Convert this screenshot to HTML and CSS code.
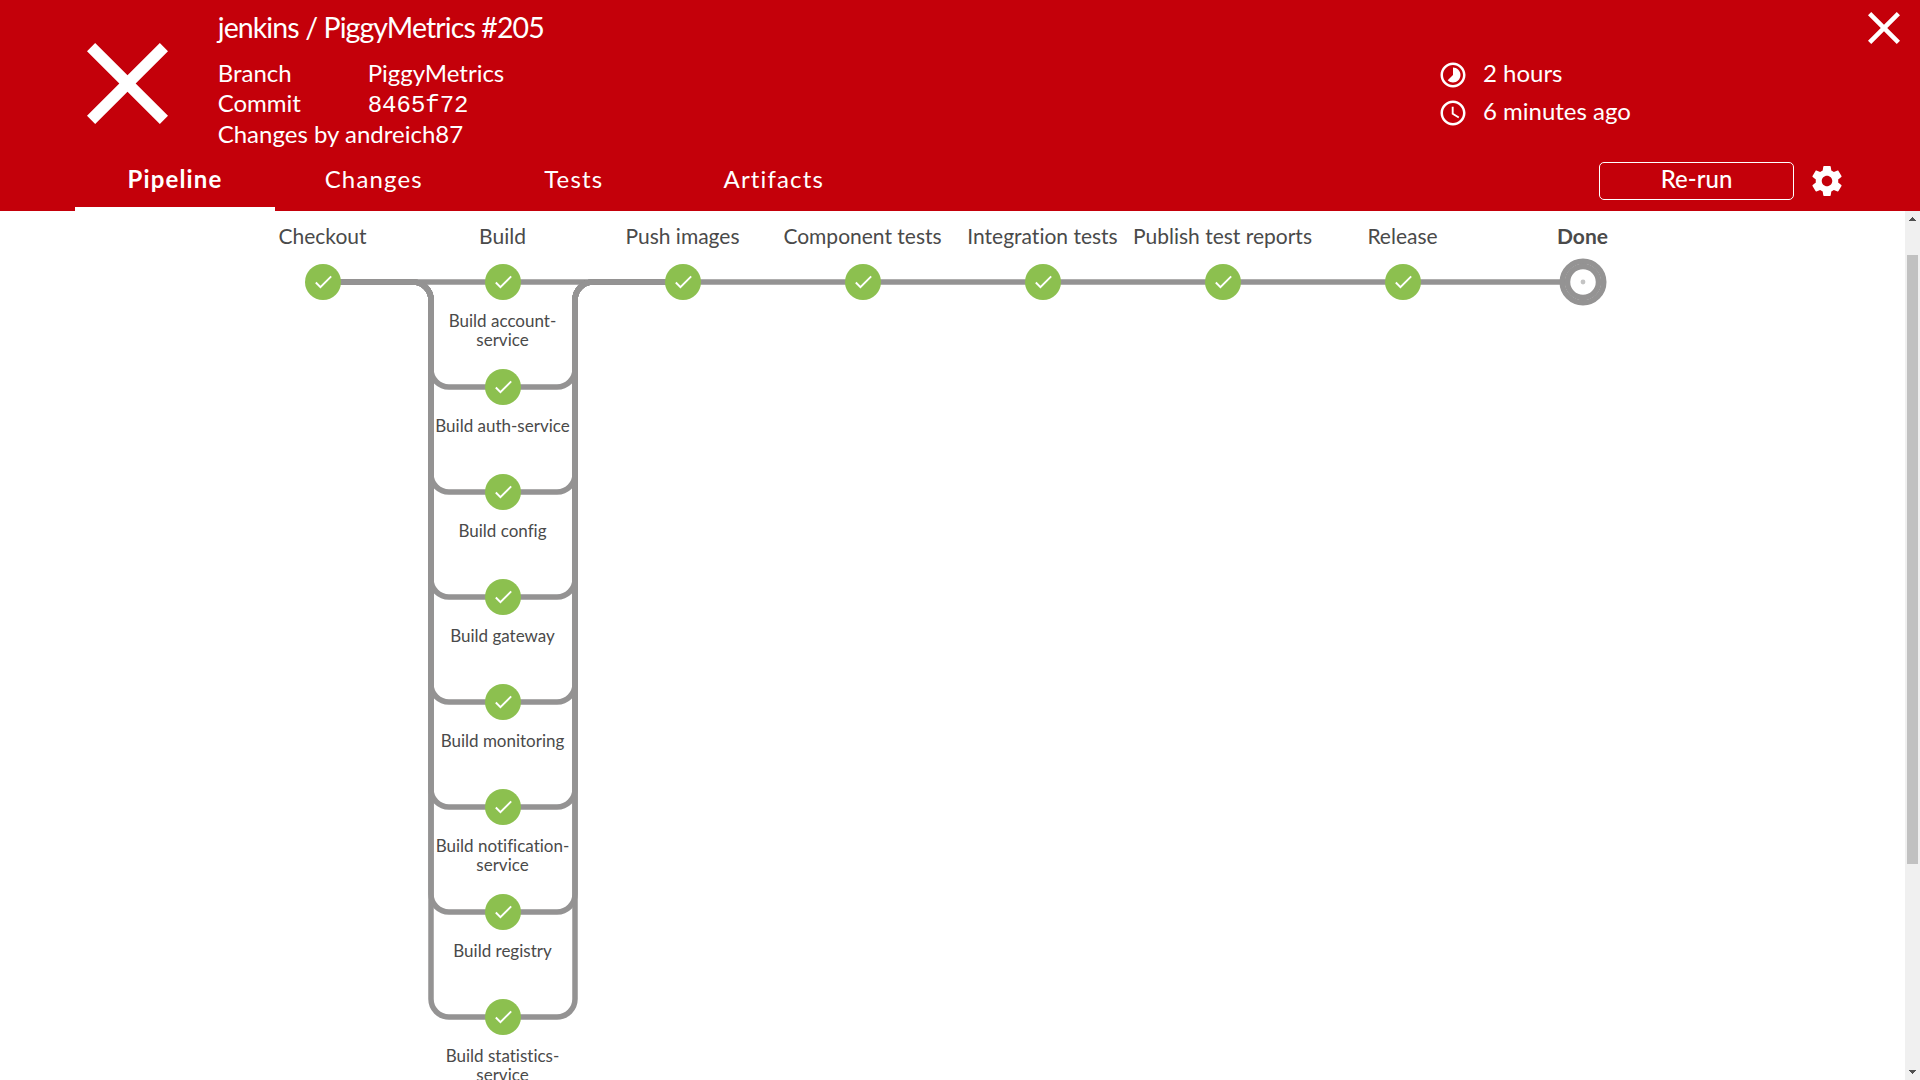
FILE: index.html
```
<!DOCTYPE html>
<html lang="en">
<head>
<meta charset="utf-8">
<title>jenkins / PiggyMetrics #205</title>
<link rel="stylesheet" href="styles.css">
</head>
<body>
<header class="header">
  <div class="top">
    <svg class="status" viewBox="5 5 14 14"><path d="M19 6.41L17.59 5 12 10.59 6.41 5 5 6.41 10.59 12 5 17.59 6.41 19 12 13.41 17.59 19 19 17.59 13.41 12z"/></svg>
    <div class="info">
      <h1 class="title">jenkins / PiggyMetrics #205</h1>
      <div class="row"><span class="key">Branch</span><span>PiggyMetrics</span></div>
      <div class="row"><span class="key">Commit</span><span class="hash">8465f72</span></div>
      <div class="row">Changes by andreich87</div>
    </div>
    <div class="times">
      <div class="time"><svg class="icon" viewBox="0 0 24 24"><path d="M16.24 7.76C15.07 6.59 13.54 6 12 6v6l-4.24 4.24c2.34 2.34 6.14 2.34 8.49 0 2.34-2.34 2.34-6.14-.01-8.48zM12 2C6.48 2 2 6.48 2 12s4.48 10 10 10 10-4.48 10-10S17.52 2 12 2zm0 18c-4.42 0-8-3.58-8-8s3.58-8 8-8 8 3.58 8 8-3.58 8-8 8z"/></svg><span>2 hours</span></div>
      <div class="time"><svg class="icon" viewBox="0 0 24 24"><path d="M11.99 2C6.47 2 2 6.48 2 12s4.47 10 9.99 10C17.52 22 22 17.52 22 12S17.52 2 11.99 2zM12 20c-4.42 0-8-3.58-8-8s3.58-8 8-8 8 3.58 8 8-3.58 8-8 8zm.5-13H11v6l5.25 3.15.75-1.23-4.5-2.67z"/></svg><span>6 minutes ago</span></div>
    </div>
    <svg class="close" viewBox="5 5 14 14"><path d="M19 6.41L17.59 5 12 10.59 6.41 5 5 6.41 10.59 12 5 17.59 6.41 19 12 13.41 17.59 19 19 17.59 13.41 12z"/></svg>
  </div>
  <div class="bar">
    <nav class="tabs">
      <a class="tab selected">Pipeline</a>
      <a class="tab">Changes</a>
      <a class="tab">Tests</a>
      <a class="tab">Artifacts</a>
    </nav>
    <button class="rerun">Re-run</button>
    <svg class="gear" viewBox="0 0 24 24"><path d="M19.43 12.98c.04-.32.07-.64.07-.98s-.03-.66-.07-.98l2.11-1.65c.19-.15.24-.42.12-.64l-2-3.46c-.12-.22-.39-.3-.61-.22l-2.49 1c-.52-.4-1.08-.73-1.69-.98l-.38-2.65C14.46 2.18 14.25 2 14 2h-4c-.25 0-.46.18-.49.42l-.38 2.65c-.61.25-1.17.59-1.69.98l-2.49-1c-.23-.09-.49 0-.61.22l-2 3.46c-.13.22-.07.49.12.64l2.11 1.65c-.04.32-.07.65-.07.98s.03.66.07.98l-2.11 1.65c-.19.15-.24.42-.12.64l2 3.46c.12.22.39.3.61.22l2.49-1c.52.4 1.08.73 1.69.98l.38 2.65c.03.24.24.42.49.42h4c.25 0 .46-.18.49-.42l.38-2.65c.61-.25 1.17-.59 1.69-.98l2.49 1c.23.09.49 0 .61-.22l2-3.46c.12-.22.07-.49-.12-.64l-2.11-1.65zM12 15.5c-1.93 0-3.5-1.57-3.5-3.5s1.57-3.5 3.5-3.5 3.5 1.57 3.5 3.5-1.57 3.5-3.5 3.5z"/></svg>
  </div>
</header>
<div class="body">
  <main class="graph">
    <svg class="lines" width="1905" height="869" viewBox="0 211 1905 869">
      <defs>
        <g id="ok"><circle r="18" fill="#8cc04f"/><path transform="translate(-11.1 -11.6) scale(.95)" fill="#fff" d="M9 16.17L4.83 12l-1.42 1.41L9 19 21 7l-1.41-1.41z"/></g>
      </defs>
      <g class="edge">
        <path d="M323 282H1583"/>
        <path d="M323 282H413a18 18 0 0 1 18 18V369a18 18 0 0 0 18 18H557a18 18 0 0 0 18-18V300a18 18 0 0 1 18-18H683"/>
        <path d="M323 282H413a18 18 0 0 1 18 18V474a18 18 0 0 0 18 18H557a18 18 0 0 0 18-18V300a18 18 0 0 1 18-18H683"/>
        <path d="M323 282H413a18 18 0 0 1 18 18V579a18 18 0 0 0 18 18H557a18 18 0 0 0 18-18V300a18 18 0 0 1 18-18H683"/>
        <path d="M323 282H413a18 18 0 0 1 18 18V684a18 18 0 0 0 18 18H557a18 18 0 0 0 18-18V300a18 18 0 0 1 18-18H683"/>
        <path d="M323 282H413a18 18 0 0 1 18 18V789a18 18 0 0 0 18 18H557a18 18 0 0 0 18-18V300a18 18 0 0 1 18-18H683"/>
        <path d="M323 282H413a18 18 0 0 1 18 18V894a18 18 0 0 0 18 18H557a18 18 0 0 0 18-18V300a18 18 0 0 1 18-18H683"/>
        <path d="M323 282H413a18 18 0 0 1 18 18V999a18 18 0 0 0 18 18H557a18 18 0 0 0 18-18V300a18 18 0 0 1 18-18H683"/>
      </g>
      <use href="#ok" x="323" y="282"/><use href="#ok" x="503" y="282"/><use href="#ok" x="683" y="282"/><use href="#ok" x="863" y="282"/>
      <use href="#ok" x="1043" y="282"/><use href="#ok" x="1223" y="282"/><use href="#ok" x="1403" y="282"/>
      <use href="#ok" x="503" y="387"/><use href="#ok" x="503" y="492"/><use href="#ok" x="503" y="597"/><use href="#ok" x="503" y="702"/>
      <use href="#ok" x="503" y="807"/><use href="#ok" x="503" y="912"/><use href="#ok" x="503" y="1017"/>
      <circle cx="1583" cy="282" r="18" fill="#fff"/>
      <g class="edge"><circle cx="1583" cy="282" r="20.75"/><circle cx="1583" cy="282" r="15.5"/></g>
      <circle cx="1583" cy="282" r="2.4" fill="#c4c4c4"/>
    </svg>
    <div class="stages">
      <span>Checkout</span><span>Build</span><span>Push images</span><span>Component tests</span><span>Integration tests</span><span>Publish test reports</span><span>Release</span><span class="current">Done</span>
    </div>
    <div class="branches">
      <span>Build account-service</span><span>Build auth-service</span><span>Build config</span><span>Build gateway</span><span>Build monitoring</span><span>Build notification-service</span><span>Build registry</span><span>Build statistics-service</span>
    </div>
  </main>
  <div class="scrollbar">
    <svg width="15" height="10" viewBox="0 0 15 10" shape-rendering="crispEdges"><path fill="#505050" d="M7 6h1v1h1v1h1v1h1v1h-7v-1h1v-1h1v-1h1z"/></svg>
    <div class="thumb"></div>
    <svg class="down" width="15" height="10" viewBox="0 0 15 10" shape-rendering="crispEdges"><path fill="#505050" d="M4 0h7v1h-1v1h-1v1h-1v1h-1v-1h-1v-1h-1v-1h-1z"/></svg>
  </div>
</div>
</body>
</html>
```
FILE: styles.css
```
* { box-sizing: border-box; }
body {
  margin: 0;
  height: 1080px;
  display: flex;
  flex-direction: column;
  overflow: hidden;
  background: #fff;
  color: #4a4a4a;
  font-family: Lato, sans-serif;
  font-variant-ligatures: none;
}
.header {
  height: 211px;
  flex: none;
  display: flex;
  flex-direction: column;
  background: #c4000a;
  color: #fff;
}
.header svg { fill: #fff; flex: none; }
.top { flex: 1; display: flex; align-items: flex-start; }
.status { width: 81px; height: 81px; margin: 43px 49.7px 0 87px; }
.info { width: 1222.3px; padding-top: 9px; font-size: 24px; }
.title { margin: 0 0 13px; font-size: 28.5px; line-height: 36px; font-weight: 400; letter-spacing: -.9px; }
.row { display: flex; align-items: baseline; height: 30.4px; line-height: 30px; }
.key { width: 150px; }
.hash { font-family: "Liberation Mono", monospace; font-size: 24px; }
.times { flex: 1; padding-top: 55px; font-size: 24px; }
.time { display: flex; align-items: center; gap: 15px; height: 38px; line-height: 36px; }
.time span { margin-top: -2px; }
.icon { width: 30px; height: 30px; margin: 1.5px 0 0 -2px; }
.close { width: 32px; height: 32px; margin: 12px 20px 0 0; }
.bar { height: 59px; display: flex; align-items: flex-start; padding-left: 75px; }
.tabs { display: flex; flex: 1; }
.tab {
  width: 200px;
  height: 59px;
  padding-right: 2.5px;
  text-align: center;
  font-size: 24px;
  line-height: 54px;
  letter-spacing: 1.15px;
}
.tab.selected { padding-right: 0; font-weight: 700; border-bottom: 4px solid #fff; }
.rerun {
  width: 195px;
  height: 38px;
  margin-top: 10px;
  padding: 0 0 5px;
  border: 1px solid #fff;
  border-radius: 5px;
  background: none;
  color: #fff;
  font: 500 24px Lato, sans-serif;
}
.gear { width: 36px; height: 36px; margin: 11px 75px 0 15px; }
.body { flex: 1; min-height: 0; display: flex; }
.graph { position: relative; flex: 1; overflow: hidden; }
.lines { position: absolute; left: 0; top: 0; }
.edge { fill: none; stroke: #949393; stroke-width: 5.5; }
.stages {
  position: relative;
  display: grid;
  grid-template-columns: repeat(8, 180px);
  margin-left: 232.5px;
  padding-top: 8px;
  font-size: 21px;
  line-height: 34px;
  text-align: center;
  white-space: nowrap;
}
.current { font-weight: 700; }
.branches {
  position: relative;
  display: grid;
  grid-auto-rows: 105px;
  width: 140px;
  margin: 58px 0 0 432.5px;
  font-size: 17px;
  line-height: 19px;
  text-align: center;
}
.scrollbar { width: 15px; display: flex; flex-direction: column; background: #f0f0f0; }
.thumb { width: 11px; height: 609px; margin: 34px 0 0 2px; background: #c1c1c1; }
.down { margin-top: auto; margin-bottom: 0; }
```
